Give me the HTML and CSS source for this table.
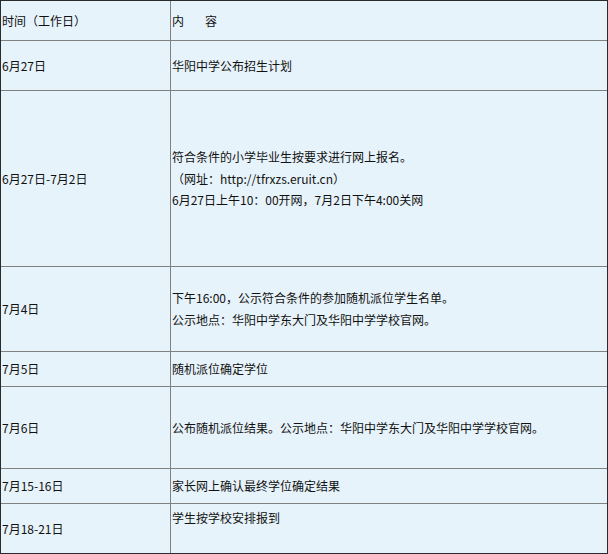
FILE: index.html
```html
<!DOCTYPE html>
<html lang="zh-CN">
<head>
<meta charset="utf-8">
<title>招生时间安排</title>
<link rel="stylesheet" href="styles.css">
</head>
<body>
<table class="schedule">
  <tr class="r-head">
    <td class="c-date">时间（工作日）</td>
    <td class="c-info">内<span class="gap"></span>容</td>
  </tr>
  <tr class="r1">
    <td class="c-date">6月27日</td>
    <td class="c-info">华阳中学公布招生计划</td>
  </tr>
  <tr class="r2">
    <td class="c-date">6月27日-7月2日</td>
    <td class="c-info">符合条件的小学毕业生按要求进行网上报名。<br>（网址：http://tfrxzs.eruit.cn）<br>6月27日上午10：00开网，7月2日下午4:00关网</td>
  </tr>
  <tr class="r3">
    <td class="c-date">7月4日</td>
    <td class="c-info">下午16:00，公示符合条件的参加随机派位学生名单。<br>公示地点：华阳中学东大门及华阳中学学校官网。</td>
  </tr>
  <tr class="r4">
    <td class="c-date">7月5日</td>
    <td class="c-info">随机派位确定学位</td>
  </tr>
  <tr class="r5">
    <td class="c-date">7月6日</td>
    <td class="c-info">公布随机派位结果。公示地点：华阳中学东大门及华阳中学学校官网。</td>
  </tr>
  <tr class="r6">
    <td class="c-date">7月15-16日</td>
    <td class="c-info">家长网上确认最终学位确定结果</td>
  </tr>
  <tr class="r7 last">
    <td class="c-date">7月18-21日</td>
    <td class="c-info">学生按学校安排报到<br>&nbsp;</td>
  </tr>
</table>
</body>
</html>
```
FILE: styles.css
```css
html, body {
  margin: 0;
  padding: 0;
  background: #ffffff;
}

.schedule {
  width: 608px;
  border-collapse: separate;
  border-spacing: 0;
  border: 1px solid #2b2b2b;
  background: #e7f3fa;
  font-family: "Noto Sans CJK SC", "Noto Sans", sans-serif;
  font-size: 12px;
  line-height: 1.8;
  color: #111111;
  table-layout: fixed;
}

.schedule td {
  box-sizing: border-box;
  padding: 0 0 0 1px;
  vertical-align: middle;
  border-bottom: 1px solid #808080;
}

.schedule .last td {
  border-bottom: none;
}

.c-date {
  width: 170px;
  border-right: 1px solid #808080;
}

.gap {
  display: inline-block;
  width: 21px;
}

.r-head td { height: 40px; }
.r1 td { height: 50px; }
.r2 td { height: 176px; }
.r3 td { height: 85px; }
.r4 td { height: 35px; }
.r5 td { height: 82px; }
.r6 td { height: 35px; }
.r7 td { height: 49px; }
```
